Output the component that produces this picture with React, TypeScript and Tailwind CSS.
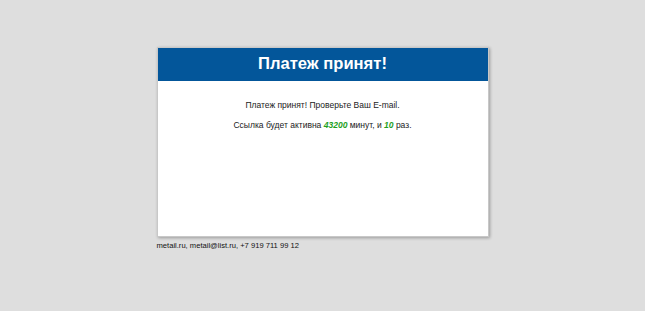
export default function App() {
  return (
    <div className="min-h-[311px] w-full bg-[#dedede] pt-[47px] font-['Liberation_Sans',Arial,sans-serif]">
      <div className="mx-auto w-[332px]">
        <div className="h-[190px] border border-[#c8c8c8] bg-white shadow-[1px_1px_3px_rgba(0,0,0,0.3)]">
          <div className="flex h-[33px] items-center justify-center bg-[#03569a]">
            <h1 className="text-[16.6px] font-bold leading-none text-white">Платеж принят!</h1>
          </div>
          <div className="pt-[18px] text-center text-[8.5px] leading-[12px] text-[#222]">
            <p>Платеж принят! Проверьте Ваш E-mail.</p>
            <p className="mt-[8px]">
              Ссылка будет активна <b className="italic text-[#1ea01e]">43200</b> минут, и{' '}
              <b className="italic text-[#1ea01e]">10</b> раз.
            </p>
          </div>
        </div>
        <div className="mt-[3px] text-[7.6px] leading-[12px] text-[#111]">
          metail.ru, metail@list.ru, +7 919 711 99 12
        </div>
      </div>
    </div>
  );
}
